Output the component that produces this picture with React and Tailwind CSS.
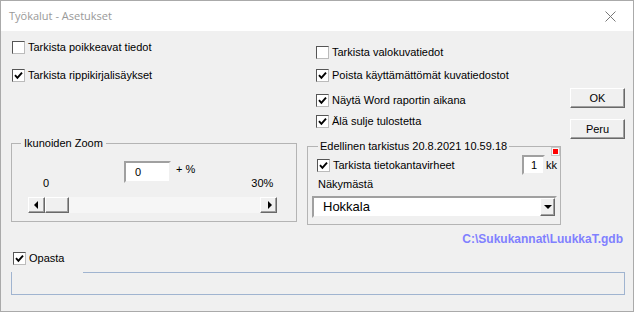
import React from "react";

const font = { fontFamily: '"Liberation Sans", Arial, sans-serif' };

const CheckBox = ({ checked }) => (
  <span className="w-[13px] h-[13px] shrink-0 border border-t-[#555] border-l-[#555] border-b-[#bbb] border-r-[#bbb] bg-white flex items-center justify-center">
    {checked && (
      <svg width="9" height="9" viewBox="0 0 9 9">
        <path d="M1 4.2 L3.4 6.8 L8 1.6" stroke="#000" strokeWidth="1.9" fill="none" />
      </svg>
    )}
  </span>
);

const CheckRow = ({ checked, label, className = "" }) => (
  <div className={`flex items-center gap-[3px] h-[16px] ${className}`}>
    <CheckBox checked={checked} />
    <span>{label}</span>
  </div>
);

const raised =
  "bg-[#f0f0f0] border border-t-white border-l-white border-b-[#696969] border-r-[#696969] shadow-[inset_-1px_-1px_0_#a0a0a0]";
const sunken =
  "bg-white border-2 border-t-[#a0a0a0] border-l-[#a0a0a0] border-b-[#f0f0f0] border-r-[#f0f0f0]";

const Arrow = ({ dir }) => (
  <svg width="8" height="8" viewBox="0 0 8 8">
    {dir === "left" && <path d="M5 0 L1 4 L5 8 Z" fill="#000" />}
    {dir === "right" && <path d="M3 0 L7 4 L3 8 Z" fill="#000" />}
    {dir === "down" && <path d="M0 2 L8 2 L4 6 Z" fill="#000" />}
  </svg>
);

export default function App() {
  return (
    <div
      className="w-[634px] h-[312px] border border-[#aaaaaa] bg-white flex flex-col text-[11px] text-black overflow-hidden"
      style={font}
    >
      {/* title bar */}
      <div className="h-[30px] shrink-0 flex items-center justify-between pl-[8px] pr-[17px] bg-white">
        <span className="text-[11px] text-[#999]" style={{ fontFamily: '"Open Sans", sans-serif' }}>
          Työkalut - Asetukset
        </span>
        <svg width="11" height="11" viewBox="0 0 11 11">
          <path d="M0.5 0.5 L10.5 10.5 M10.5 0.5 L0.5 10.5" stroke="#777" strokeWidth="1" />
        </svg>
      </div>

      {/* body */}
      <div className="flex-1 bg-[#f0f0f0] flex flex-col pl-[10px] pr-[8px]">
        <div className="flex">
          {/* left column */}
          <div className="w-[286px] flex flex-col">
            <CheckRow className="mt-[8px] ml-[1px]" label="Tarkista poikkeavat tiedot" />
            <CheckRow className="mt-[12px] ml-[1px]" checked label="Tarkista rippikirjalisäykset" />
            <fieldset className="mt-[53px] h-[86px] border border-[#b4b4b4]">
              <legend className="ml-[9px] px-[3px] leading-[14px]">Ikunoiden Zoom</legend>
              <div className="pl-[16px]">
                <div className="flex items-start mt-[11px]">
                  <div className="w-[96px] pt-[14px] pl-[15px]">0</div>
                  <div className={`w-[47px] h-[22px] ${sunken} pl-[9px] flex items-center`}>0</div>
                  <div className="ml-[5px]">+ %</div>
                  <div className="ml-[56px] pt-[14px]">30%</div>
                </div>
                <div className="flex h-[16px] w-[249px] mt-[5px] bg-[#f6f6f6]">
                  <div className={`w-[17px] h-[16px] ${raised} flex items-center justify-center`}>
                    <Arrow dir="left" />
                  </div>
                  <div className={`w-[24px] h-[16px] ${raised}`} />
                  <div className="flex-1" />
                  <div className={`w-[17px] h-[16px] ${raised} flex items-center justify-center`}>
                    <Arrow dir="right" />
                  </div>
                </div>
              </div>
            </fieldset>
          </div>

          {/* right column */}
          <div className="w-[254px] ml-[10px] flex flex-col">
            <div className="pl-[9px] flex flex-col">
              <CheckRow className="mt-[13px]" label="Tarkista valokuvatiedot" />
              <CheckRow className="mt-[7px]" checked label="Poista käyttämättömät kuvatiedostot" />
              <CheckRow className="mt-[9px]" checked label="Näytä Word raportin aikana" />
              <CheckRow className="mt-[5px]" checked label="Älä sulje tulostetta" />
            </div>
            <fieldset className="relative mt-[10px] h-[86px] border border-[#b4b4b4] pl-[4px] pr-[3px]">
              <legend className="ml-[6px] px-[2px] leading-[14px]">
                Edellinen tarkistus 20.8.2021 10.59.18
              </legend>
              <div className="flex justify-end h-0">
                <span className="relative -top-[5px] -right-[2px] w-[7px] h-[7px] bg-[#ff0000] border border-[#f8f8f8] outline outline-1 outline-[#c8c8c8]" />
              </div>
              <div className="flex items-center mt-[2px] pl-[5px]">
                <CheckRow checked label="Tarkista tietokantavirheet" />
                <div className="flex-1" />
                <div className={`w-[23px] h-[20px] ${sunken} pl-[7px] flex items-center`}>1</div>
                <span className="ml-[1px]">kk</span>
              </div>
              <div className="pl-[6px] mt-[2px] leading-[14px]">Näkymästä</div>
              <div className={`mt-[5px] h-[22px] ${sunken} flex items-center`}>
                <span className="pl-[9px] text-[13px] flex-1">Hokkala</span>
                <div className={`w-[15px] h-[18px] ${raised} flex items-center justify-center`}>
                  <Arrow dir="down" />
                </div>
              </div>
            </fieldset>
          </div>

          {/* buttons */}
          <div className="flex flex-col ml-[9px] pt-[57px] gap-[11px]">
            <button className={`w-[55px] h-[20px] ${raised} flex items-center justify-center`}>OK</button>
            <button className={`w-[55px] h-[20px] ${raised} flex items-center justify-center`}>Peru</button>
          </div>
        </div>

        <div className="flex justify-end mt-[5px] pr-[2px]">
          <span className="text-[12px] font-bold text-[#8080ff]">C:\Sukukannat\LuukkaT.gdb</span>
        </div>

        <CheckRow className="mt-[2px] ml-[2px]" checked label="Opasta" />

        <div className="mt-[6px] h-[23px] border-l border-r border-b border-[#a0b4d0] flex flex-col">
          <div className="ml-[71px] border-t border-[#a0b4d0]" />
        </div>
      </div>
    </div>
  );
}
